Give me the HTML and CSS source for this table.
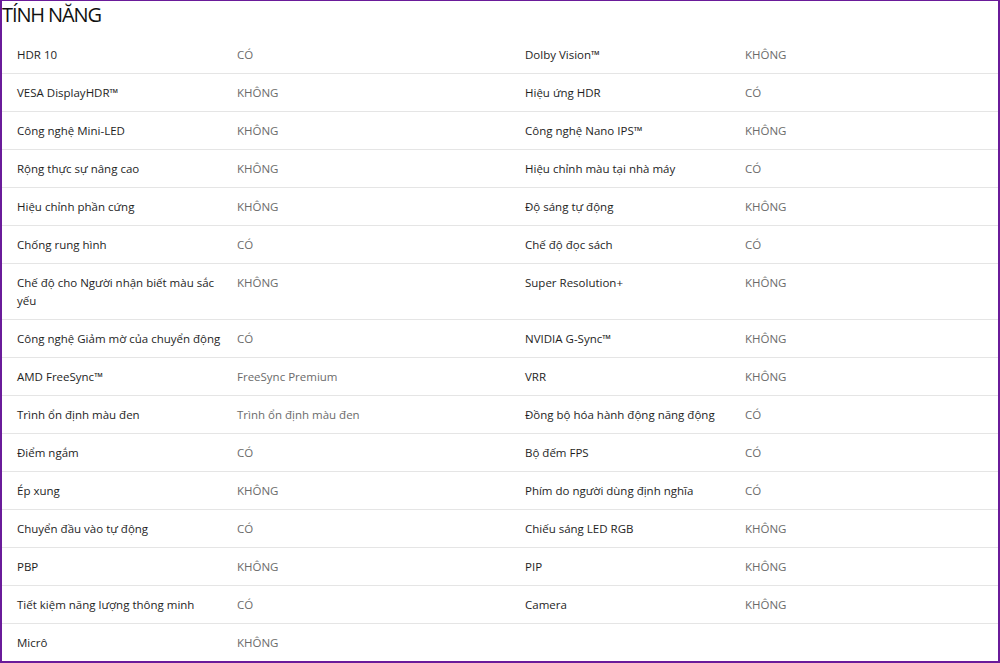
FILE: index.html
```html
<!DOCTYPE html>
<html lang="vi">
<head>
<meta charset="utf-8">
<title>Tính năng</title>
<link rel="stylesheet" href="styles.css">
</head>
<body>
<div class="frame">
  <h2 class="title">TÍNH NĂNG</h2>
  <div class="specs">
    <div class="row"><div class="cell"><span class="label">HDR 10</span><span class="value">CÓ</span></div><div class="cell"><span class="label">Dolby Vision™</span><span class="value">KHÔNG</span></div></div>
    <div class="row"><div class="cell"><span class="label">VESA DisplayHDR™</span><span class="value">KHÔNG</span></div><div class="cell"><span class="label">Hiệu ứng HDR</span><span class="value">CÓ</span></div></div>
    <div class="row"><div class="cell"><span class="label">Công nghệ Mini-LED</span><span class="value">KHÔNG</span></div><div class="cell"><span class="label">Công nghệ Nano IPS™</span><span class="value">KHÔNG</span></div></div>
    <div class="row"><div class="cell"><span class="label">Rộng thực sự nâng cao</span><span class="value">KHÔNG</span></div><div class="cell"><span class="label">Hiệu chỉnh màu tại nhà máy</span><span class="value">CÓ</span></div></div>
    <div class="row"><div class="cell"><span class="label">Hiệu chỉnh phần cứng</span><span class="value">KHÔNG</span></div><div class="cell"><span class="label">Độ sáng tự động</span><span class="value">KHÔNG</span></div></div>
    <div class="row"><div class="cell"><span class="label">Chống rung hình</span><span class="value">CÓ</span></div><div class="cell"><span class="label">Chế độ đọc sách</span><span class="value">CÓ</span></div></div>
    <div class="row"><div class="cell"><span class="label">Chế độ cho Người nhận biết màu sắc yếu</span><span class="value">KHÔNG</span></div><div class="cell"><span class="label">Super Resolution+</span><span class="value">KHÔNG</span></div></div>
    <div class="row"><div class="cell"><span class="label">Công nghệ Giảm mờ của chuyển động</span><span class="value">CÓ</span></div><div class="cell"><span class="label">NVIDIA G-Sync™</span><span class="value">KHÔNG</span></div></div>
    <div class="row"><div class="cell"><span class="label">AMD FreeSync™</span><span class="value">FreeSync Premium</span></div><div class="cell"><span class="label">VRR</span><span class="value">KHÔNG</span></div></div>
    <div class="row"><div class="cell"><span class="label">Trình ổn định màu đen</span><span class="value">Trình ổn định màu đen</span></div><div class="cell"><span class="label">Đồng bộ hóa hành động năng động</span><span class="value">CÓ</span></div></div>
    <div class="row"><div class="cell"><span class="label">Điểm ngắm</span><span class="value">CÓ</span></div><div class="cell"><span class="label">Bộ đếm FPS</span><span class="value">CÓ</span></div></div>
    <div class="row"><div class="cell"><span class="label">Ép xung</span><span class="value">KHÔNG</span></div><div class="cell"><span class="label">Phím do người dùng định nghĩa</span><span class="value">CÓ</span></div></div>
    <div class="row"><div class="cell"><span class="label">Chuyển đầu vào tự động</span><span class="value">CÓ</span></div><div class="cell"><span class="label">Chiếu sáng LED RGB</span><span class="value">KHÔNG</span></div></div>
    <div class="row"><div class="cell"><span class="label">PBP</span><span class="value">KHÔNG</span></div><div class="cell"><span class="label">PIP</span><span class="value">KHÔNG</span></div></div>
    <div class="row"><div class="cell"><span class="label">Tiết kiệm năng lượng thông minh</span><span class="value">CÓ</span></div><div class="cell"><span class="label">Camera</span><span class="value">KHÔNG</span></div></div>
    <div class="row last"><div class="cell"><span class="label">Micrô</span><span class="value">KHÔNG</span></div><div class="cell"></div></div>
  </div>
</div>
</body>
</html>
```

FILE: styles.css
```css
* { box-sizing: border-box; }
html, body { margin: 0; padding: 0; background: #fff; }
body {
  font-family: "Open Sans", "Noto Sans", "Liberation Sans", sans-serif;
  color: #222;
}
.frame {
  width: 1000px;
  height: 663px;
  overflow: hidden;
  border-style: solid;
  border-color: #6a1b9a;
  border-width: 1px 2px 2px 2px;
}
.title {
  margin: 0;
  padding: 1px 0 0 0;
  height: 35px;
  font-size: 20px;
  font-weight: 400;
  line-height: 26px;
  color: #111;
  letter-spacing: -1.1px;
}
.specs { display: flex; flex-direction: column; }
.row {
  display: grid;
  grid-template-columns: 508px 1fr;
  border-bottom: 1px solid #e5e5e5;
}
.row.last { border-bottom: none; }
.cell {
  display: grid;
  grid-template-columns: 220px 1fr;
  padding: 10px 0 9px 15px;
  font-size: 11.5px;
  line-height: 18px;
}
.label { color: #1e1e1e; padding-right: 2px; }
.value { color: #6b6b6b; }
```
